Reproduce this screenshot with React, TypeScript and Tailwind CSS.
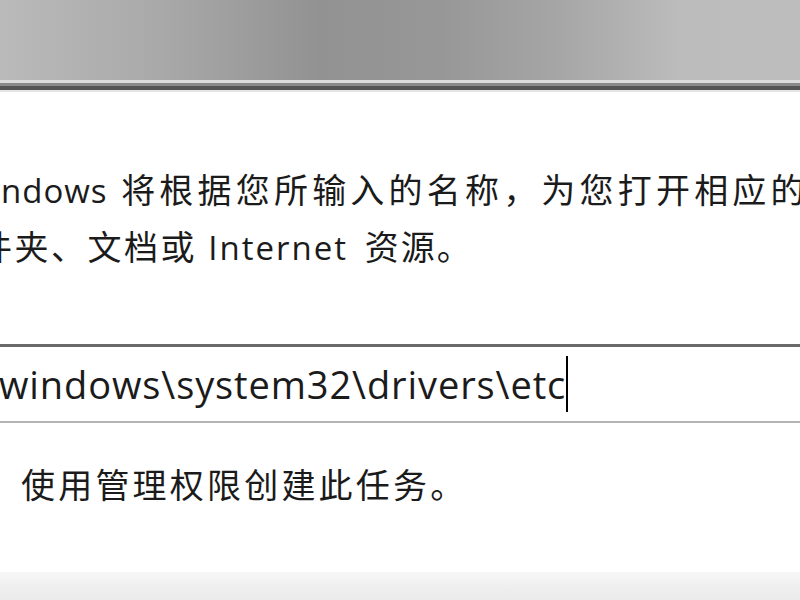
import React from "react";

export default function App() {
  return (
    <div
      className="w-[800px] h-[600px] overflow-hidden bg-white flex flex-col text-[#1b1b1b]"
      style={{ fontFamily: '"Open Sans", "Noto Sans CJK SC", sans-serif' }}
    >
      {/* title bar */}
      <div className="h-[80px] shrink-0 bg-[linear-gradient(90deg,#bababa_0%,#a9a9a9_20%,#929292_40%,#979797_55%,#a6a6a6_70%,#bcbcbc_85%,#bdbdbd_100%)]" />
      <div className="h-[3px] shrink-0 bg-[#dcdcdc]" />
      <div className="h-[3px] shrink-0 bg-[#8a8a8a]" />
      <div className="h-[4px] shrink-0 bg-[#555555]" />
      <div className="h-[2px] shrink-0 bg-[#e4e4e4]" />

      {/* description */}
      <div className="mt-[70px] overflow-hidden">
        <p className="text-[34px] leading-[56px] whitespace-nowrap ml-[1px]">
          <span className="text-[33px] tracking-[1px]">ndows </span>
          <span className="tracking-[4.2px] ml-[4px]">将根据您所输入的名称，为您打开相应的程序、文</span>
        </p>
        <p className="text-[34px] leading-[56px] whitespace-nowrap -ml-[22px]">
          <span className="tracking-[2.5px]">件夹、文档或 </span>
          <span className="text-[33px] tracking-[2px]">Internet </span>
          <span className="tracking-[2px] ml-[6px]">资源。</span>
        </p>
      </div>

      {/* input */}
      <div className="mt-[68px] h-[79px] shrink-0 border-t-[3px] border-t-[#6a6a6a] border-b-2 border-b-[#b4b4b4] flex items-center">
        <span className="text-[38px] leading-none whitespace-nowrap -ml-[1px] tracking-[0.9px]">
          windows\system32\drivers\etc
        </span>
        <span className="w-[2px] h-[56px] bg-black" />
      </div>

      {/* checkbox label */}
      <div className="mt-[40px] pl-[21px]">
        <span className="text-[34px] leading-[44px] tracking-[3.2px] whitespace-nowrap">
          使用管理权限创建此任务。
        </span>
      </div>

      <div className="flex-1" />
      <div className="h-[28px] shrink-0 bg-[linear-gradient(180deg,#f7f7f7_0%,#efefef_50%,#ebebeb_100%)]" />
    </div>
  );
}
